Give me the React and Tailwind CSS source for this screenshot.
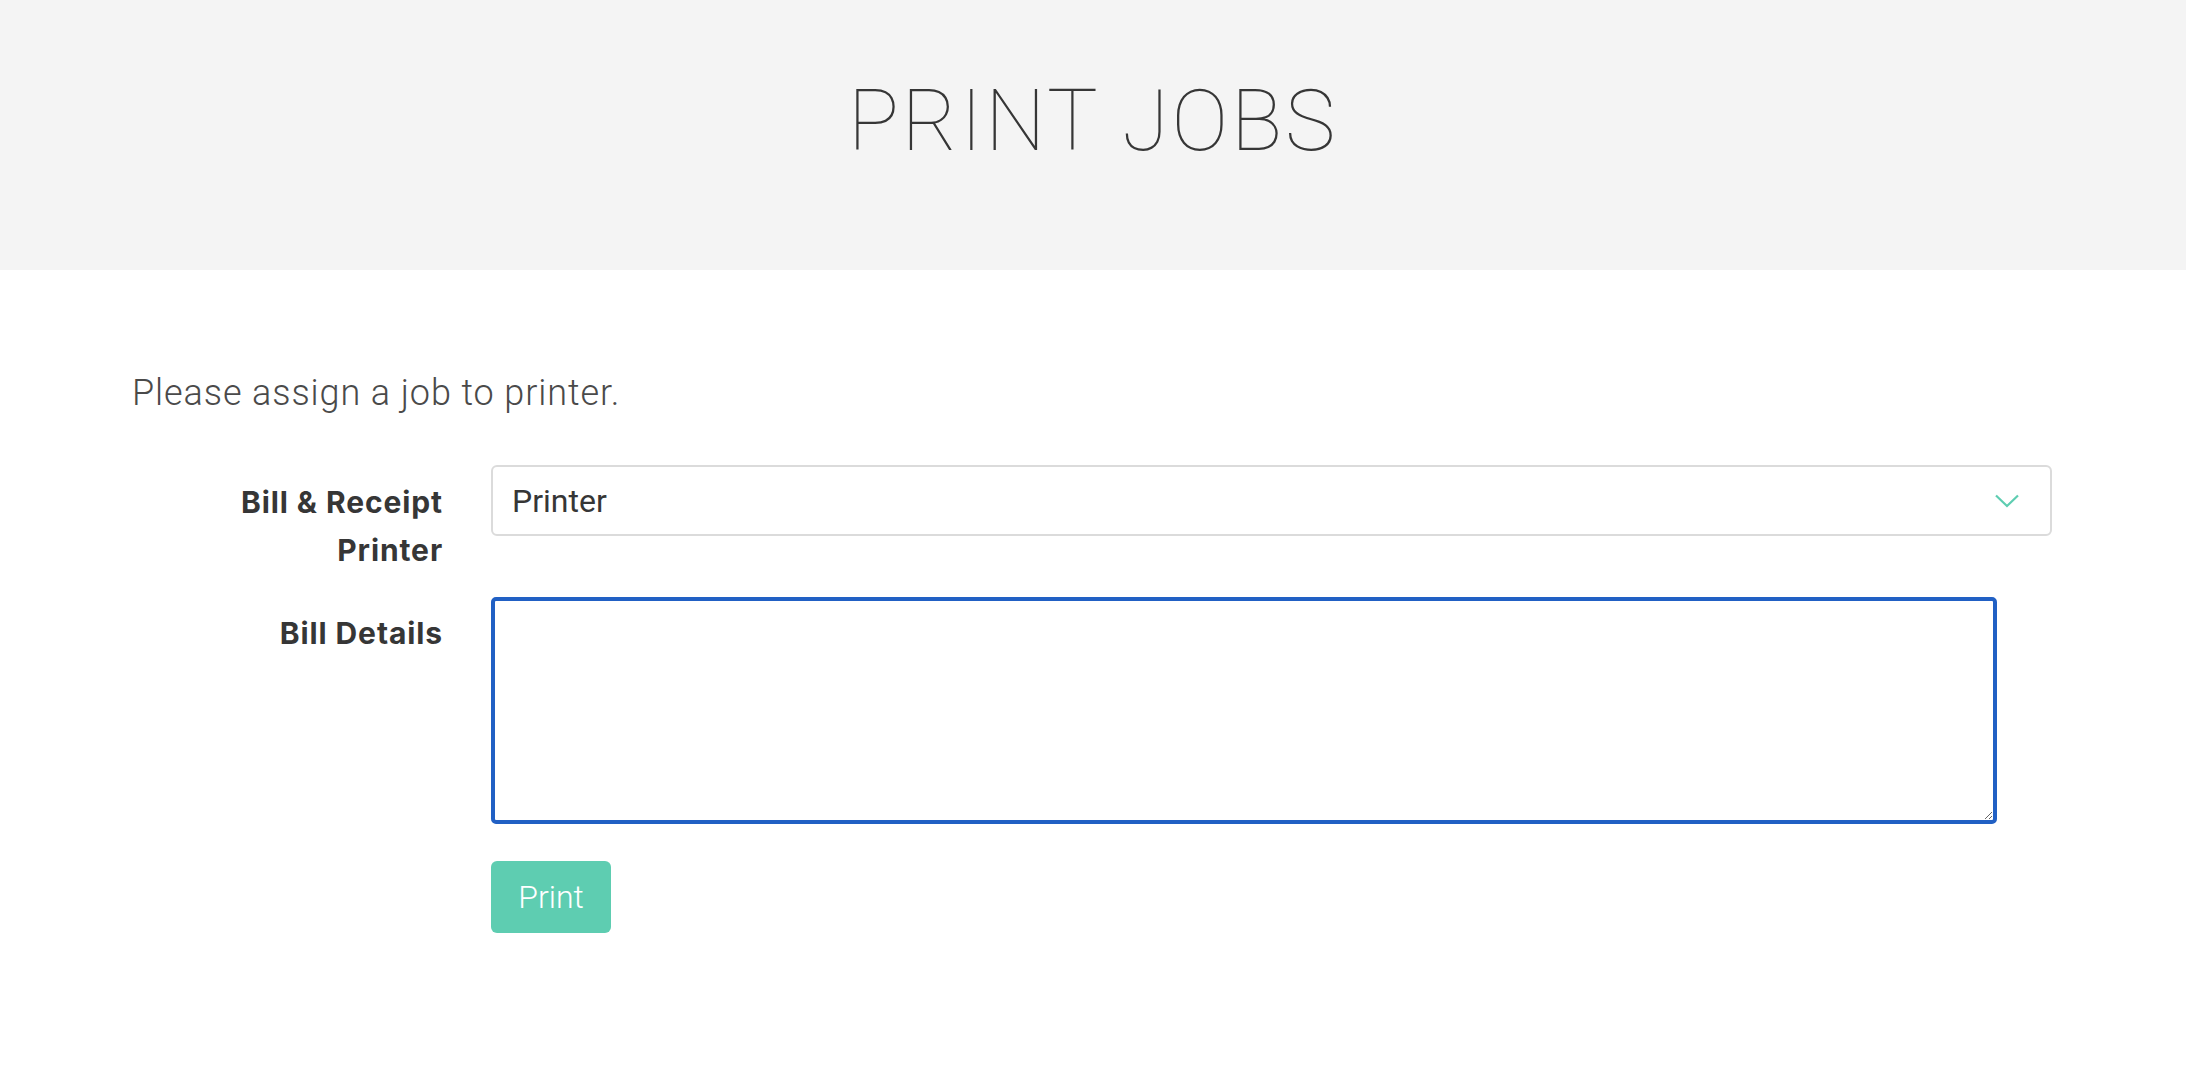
import { useState } from "react";

function Chevron() {
  return (
    <svg width="24" height="14" viewBox="0 0 24 14" fill="none">
      <path d="M1 1.5 L12 12 L23 1.5" stroke="#5ecdb1" strokeWidth="2.2" />
    </svg>
  );
}

export default function App() {
  const [details, setDetails] = useState("");

  return (
    <div className="min-h-screen bg-white font-['Roboto',sans-serif] text-[#363636]">
      {/* Header */}
      <header className="h-[270px] bg-[#f4f4f4] pt-[79px] text-center">
        <h1 className="text-[85px] font-thin leading-none tracking-[2.8px] text-[#363636]">
          PRINT JOBS
        </h1>
      </header>

      <main className="pl-[132px] pr-[134px]">
        <p className="mt-[105px] text-[36px] font-light leading-none tracking-[0.9px] text-[#4a4a4a]">
          Please assign a job to printer.
        </p>

        {/* Form */}
        <div className="mt-[54px] grid grid-cols-[311px_1fr] gap-x-[48px]">
          <label className="pt-[13px] text-right font-['Inter',sans-serif] text-[30px] font-bold leading-[48px] tracking-[0.9px] text-[#363636]">
            Bill &amp; Receipt
            <br />
            Printer
          </label>
          <div>
            <div className="flex h-[71px] cursor-pointer items-center justify-between rounded-[6px] border-2 border-[#dbdbdb] pl-[19px] pr-[31px]">
              <span className="text-[32px] leading-none text-[#363636]">Printer</span>
              <Chevron />
            </div>
          </div>

          <label className="mt-[23px] pt-[12px] text-right font-['Inter',sans-serif] text-[30px] font-bold leading-[48px] tracking-[0.9px] text-[#363636]">
            Bill Details
          </label>
          <div className="mt-[23px]">
            <textarea
              value={details}
              onChange={(e) => setDetails(e.target.value)}
              className="block h-[227px] w-[1506px] rounded-[5px] border-4 border-[#2160c4] bg-white p-3 text-[28px] outline-none"
            />
            <button className="mt-[37px] h-[72px] w-[120px] rounded-[6px] bg-[#5ecdb1] text-[32px] font-light text-white">
              Print
            </button>
          </div>
        </div>
      </main>
    </div>
  );
}
